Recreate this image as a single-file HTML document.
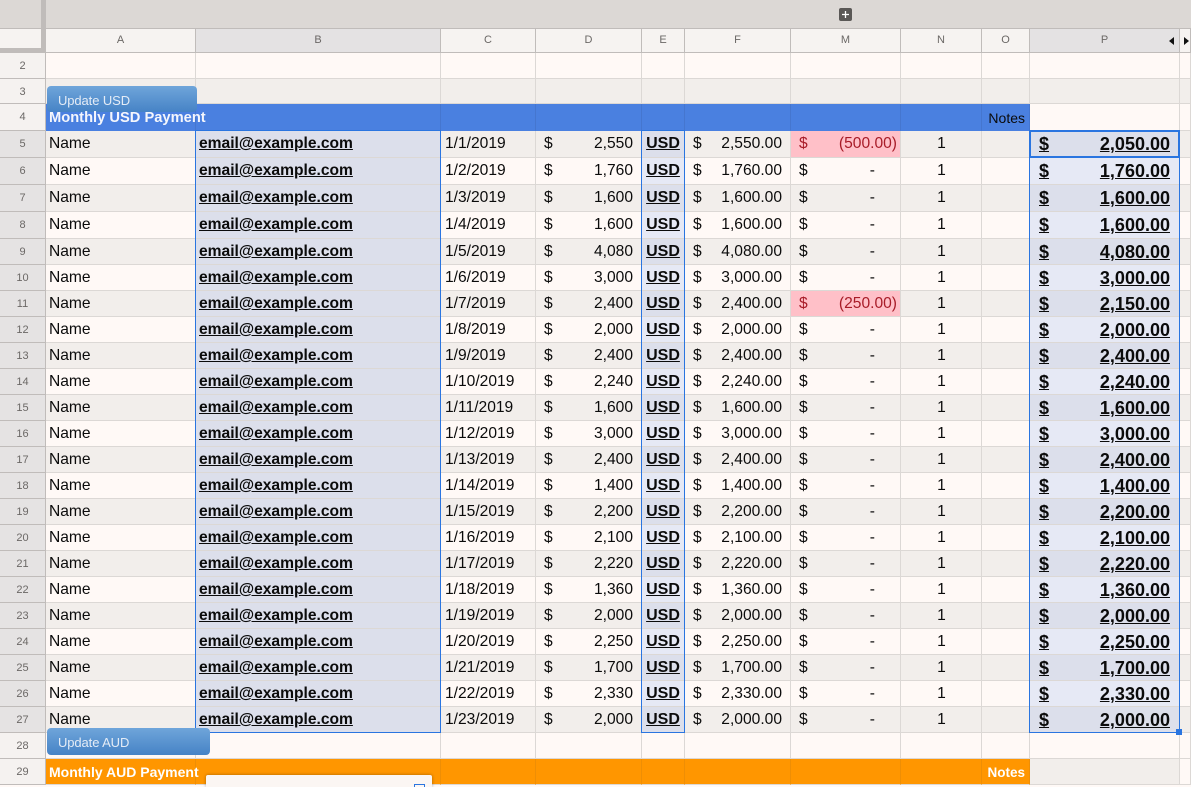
<!DOCTYPE html>
<html><head><meta charset="utf-8"><style>
html,body{margin:0;padding:0;width:1191px;height:787px;overflow:hidden;background:#fff9f6;font-family:"Liberation Sans",Arial,sans-serif;color:#0b0b0b}
.bar{position:absolute;left:0;top:0;width:1191px;height:29px;box-sizing:border-box;background:#dcd8d5;border-bottom:1px solid #c0bcba}
table{position:absolute;left:0;top:29px;border-collapse:separate;border-spacing:0;table-layout:fixed;width:1191px}
td{padding:3px 0 0;border-right:1px solid #dcd8d5;border-bottom:1px solid #dcd8d5;box-sizing:border-box;overflow:hidden;white-space:nowrap;vertical-align:top;font-size:15.6px;line-height:20px;background:#fff9f6}
tr.x td{background:#f2eeeb}
td:nth-child(1){background:#e5e3e3!important;border-right:1px solid #c0bcba;border-bottom:1px solid #c0bcba;text-align:center;font-size:11px;color:#6b6866;padding-right:0}
td:nth-child(2){padding-left:3px;background:#f2eeeb}
tr.w td:nth-child(2){background:#fff9f6}
td:nth-child(3){padding-left:3px;font-weight:bold;text-decoration:underline;background:#dcdfeb!important}
td:nth-child(4){padding-left:4px}
td:nth-child(5),td:nth-child(7){text-align:right;padding-right:8px}
td:nth-child(5) u,td:nth-child(7) u,td:nth-child(8) u{float:left;text-decoration:none}
td:nth-child(5) u{margin-left:8px}
td:nth-child(7) u{margin-left:8px}
td:nth-child(6){text-align:center;font-weight:bold;text-decoration:underline;background:#e6e9f5!important;font-size:16px}
tr.x td:nth-child(6){background:#dcdfeb!important}
td:nth-child(8){text-align:right;padding-right:25px;padding-left:0}
td:nth-child(8) u{margin-left:8px}
td.p{background:#ffc0c8!important;color:#a81c28;padding-right:3px!important}
td:nth-child(9){text-align:center;padding-left:1px}
td:nth-child(11){text-align:right;padding-right:9px;font-weight:bold;text-decoration:underline;font-size:18px;background:#e6e9f5!important}
tr.x td:nth-child(11){background:#dcdfeb!important}
td:nth-child(11) u{float:left;margin-left:9px}
tr.e td:nth-child(n+2){background:#fff9f6!important}
tr.e3 td:nth-child(n+2){background:#f2eeeb!important}
tr.t td:nth-child(n+2){background:#4a80e0!important;border-right-color:#4576cf;border-bottom-color:#4a80e0}
tr.o td:nth-child(n+2){background:#ff9600!important;border-right-color:#ee8e05}
tr.e td:nth-child(n+2),tr.e3 td:nth-child(n+2),tr.t td:nth-child(n+2),tr.o td:nth-child(n+2){padding:0;font-size:14px;font-weight:normal;text-decoration:none;text-align:right}
tr.n td:nth-child(1){background:#f5f2f0!important}
tr.t td:nth-child(11),tr.t td:nth-child(12){background:#fff9f6!important;border-right-color:#dcd8d5;border-bottom-color:#dcd8d5}
tr.o td:nth-child(11){background:#f2eeeb!important;border-right-color:#dcd8d5}
tr.o td:nth-child(12){background:#fff9f6!important;border-right-color:#dcd8d5}
tr.h td{background:#f6f3f1!important;border-right:1px solid #c0bcba;border-bottom:1px solid #c0bcba;text-align:center;font-size:11px;line-height:18px;padding:2px 0 0;color:#6b6866;font-weight:normal;text-decoration:none}
tr.h td.s{background:#e4e2e3!important}
.abs{position:absolute}
.btn{position:absolute;background:linear-gradient(#6fa5da,#4683c6);border-radius:4px;color:#e4ecf6;font-size:13px;letter-spacing:-.1px;padding-left:11px;box-sizing:border-box}
.ov{position:absolute;border:1px solid #2a75e0;box-sizing:border-box}
</style></head><body>
<div class="bar"></div>
<table>
<colgroup><col style="width:46px"><col style="width:150px"><col style="width:245px"><col style="width:95px"><col style="width:106px"><col style="width:43px"><col style="width:106px"><col style="width:110px"><col style="width:81px"><col style="width:48px"><col style="width:150px"><col style="width:11px"></colgroup>
<tr class="h" style="height:24px"><td></td><td>A</td><td class="s">B</td><td>C</td><td>D</td><td>E</td><td>F</td><td>M</td><td>N</td><td>O</td><td class="s">P</td><td></td></tr>
<tr class="e n" style="height:26px"><td>2</td><td></td><td></td><td></td><td></td><td></td><td></td><td></td><td></td><td></td><td></td><td></td></tr>
<tr class="e3 n" style="height:25px"><td>3</td><td></td><td></td><td></td><td></td><td></td><td></td><td></td><td></td><td></td><td></td><td></td></tr>
<tr class="t n" style="height:27px"><td>4</td><td></td><td></td><td></td><td></td><td></td><td></td><td></td><td></td><td style="padding:4px 4px 0 0">Notes</td><td></td><td></td></tr>
<tr class="x" style="height:27px"><td>5</td><td>Name</td><td>email@example.com</td><td>1/1/2019</td><td><u>$</u>2,550</td><td>USD</td><td><u>$</u>2,550.00</td><td class="p"><u>$</u>(500.00)</td><td>1</td><td></td><td><u>$</u>2,050.00</td><td></td></tr>
<tr class="w" style="height:27px"><td>6</td><td>Name</td><td>email@example.com</td><td>1/2/2019</td><td><u>$</u>1,760</td><td>USD</td><td><u>$</u>1,760.00</td><td><u>$</u>-</td><td>1</td><td></td><td><u>$</u>1,760.00</td><td></td></tr>
<tr class="x" style="height:27px"><td>7</td><td>Name</td><td>email@example.com</td><td>1/3/2019</td><td><u>$</u>1,600</td><td>USD</td><td><u>$</u>1,600.00</td><td><u>$</u>-</td><td>1</td><td></td><td><u>$</u>1,600.00</td><td></td></tr>
<tr class="w" style="height:27px"><td>8</td><td>Name</td><td>email@example.com</td><td>1/4/2019</td><td><u>$</u>1,600</td><td>USD</td><td><u>$</u>1,600.00</td><td><u>$</u>-</td><td>1</td><td></td><td><u>$</u>1,600.00</td><td></td></tr>
<tr class="x" style="height:26px"><td>9</td><td>Name</td><td>email@example.com</td><td>1/5/2019</td><td><u>$</u>4,080</td><td>USD</td><td><u>$</u>4,080.00</td><td><u>$</u>-</td><td>1</td><td></td><td><u>$</u>4,080.00</td><td></td></tr>
<tr class="w" style="height:26px"><td>10</td><td>Name</td><td>email@example.com</td><td>1/6/2019</td><td><u>$</u>3,000</td><td>USD</td><td><u>$</u>3,000.00</td><td><u>$</u>-</td><td>1</td><td></td><td><u>$</u>3,000.00</td><td></td></tr>
<tr class="x" style="height:26px"><td>11</td><td>Name</td><td>email@example.com</td><td>1/7/2019</td><td><u>$</u>2,400</td><td>USD</td><td><u>$</u>2,400.00</td><td class="p"><u>$</u>(250.00)</td><td>1</td><td></td><td><u>$</u>2,150.00</td><td></td></tr>
<tr class="w" style="height:26px"><td>12</td><td>Name</td><td>email@example.com</td><td>1/8/2019</td><td><u>$</u>2,000</td><td>USD</td><td><u>$</u>2,000.00</td><td><u>$</u>-</td><td>1</td><td></td><td><u>$</u>2,000.00</td><td></td></tr>
<tr class="x" style="height:26px"><td>13</td><td>Name</td><td>email@example.com</td><td>1/9/2019</td><td><u>$</u>2,400</td><td>USD</td><td><u>$</u>2,400.00</td><td><u>$</u>-</td><td>1</td><td></td><td><u>$</u>2,400.00</td><td></td></tr>
<tr class="w" style="height:26px"><td>14</td><td>Name</td><td>email@example.com</td><td>1/10/2019</td><td><u>$</u>2,240</td><td>USD</td><td><u>$</u>2,240.00</td><td><u>$</u>-</td><td>1</td><td></td><td><u>$</u>2,240.00</td><td></td></tr>
<tr class="x" style="height:26px"><td>15</td><td>Name</td><td>email@example.com</td><td>1/11/2019</td><td><u>$</u>1,600</td><td>USD</td><td><u>$</u>1,600.00</td><td><u>$</u>-</td><td>1</td><td></td><td><u>$</u>1,600.00</td><td></td></tr>
<tr class="w" style="height:26px"><td>16</td><td>Name</td><td>email@example.com</td><td>1/12/2019</td><td><u>$</u>3,000</td><td>USD</td><td><u>$</u>3,000.00</td><td><u>$</u>-</td><td>1</td><td></td><td><u>$</u>3,000.00</td><td></td></tr>
<tr class="x" style="height:26px"><td>17</td><td>Name</td><td>email@example.com</td><td>1/13/2019</td><td><u>$</u>2,400</td><td>USD</td><td><u>$</u>2,400.00</td><td><u>$</u>-</td><td>1</td><td></td><td><u>$</u>2,400.00</td><td></td></tr>
<tr class="w" style="height:26px"><td>18</td><td>Name</td><td>email@example.com</td><td>1/14/2019</td><td><u>$</u>1,400</td><td>USD</td><td><u>$</u>1,400.00</td><td><u>$</u>-</td><td>1</td><td></td><td><u>$</u>1,400.00</td><td></td></tr>
<tr class="x" style="height:26px"><td>19</td><td>Name</td><td>email@example.com</td><td>1/15/2019</td><td><u>$</u>2,200</td><td>USD</td><td><u>$</u>2,200.00</td><td><u>$</u>-</td><td>1</td><td></td><td><u>$</u>2,200.00</td><td></td></tr>
<tr class="w" style="height:26px"><td>20</td><td>Name</td><td>email@example.com</td><td>1/16/2019</td><td><u>$</u>2,100</td><td>USD</td><td><u>$</u>2,100.00</td><td><u>$</u>-</td><td>1</td><td></td><td><u>$</u>2,100.00</td><td></td></tr>
<tr class="x" style="height:26px"><td>21</td><td>Name</td><td>email@example.com</td><td>1/17/2019</td><td><u>$</u>2,220</td><td>USD</td><td><u>$</u>2,220.00</td><td><u>$</u>-</td><td>1</td><td></td><td><u>$</u>2,220.00</td><td></td></tr>
<tr class="w" style="height:26px"><td>22</td><td>Name</td><td>email@example.com</td><td>1/18/2019</td><td><u>$</u>1,360</td><td>USD</td><td><u>$</u>1,360.00</td><td><u>$</u>-</td><td>1</td><td></td><td><u>$</u>1,360.00</td><td></td></tr>
<tr class="x" style="height:26px"><td>23</td><td>Name</td><td>email@example.com</td><td>1/19/2019</td><td><u>$</u>2,000</td><td>USD</td><td><u>$</u>2,000.00</td><td><u>$</u>-</td><td>1</td><td></td><td><u>$</u>2,000.00</td><td></td></tr>
<tr class="w" style="height:26px"><td>24</td><td>Name</td><td>email@example.com</td><td>1/20/2019</td><td><u>$</u>2,250</td><td>USD</td><td><u>$</u>2,250.00</td><td><u>$</u>-</td><td>1</td><td></td><td><u>$</u>2,250.00</td><td></td></tr>
<tr class="x" style="height:26px"><td>25</td><td>Name</td><td>email@example.com</td><td>1/21/2019</td><td><u>$</u>1,700</td><td>USD</td><td><u>$</u>1,700.00</td><td><u>$</u>-</td><td>1</td><td></td><td><u>$</u>1,700.00</td><td></td></tr>
<tr class="w" style="height:26px"><td>26</td><td>Name</td><td>email@example.com</td><td>1/22/2019</td><td><u>$</u>2,330</td><td>USD</td><td><u>$</u>2,330.00</td><td><u>$</u>-</td><td>1</td><td></td><td><u>$</u>2,330.00</td><td></td></tr>
<tr class="x" style="height:26px"><td>27</td><td>Name</td><td>email@example.com</td><td>1/23/2019</td><td><u>$</u>2,000</td><td>USD</td><td><u>$</u>2,000.00</td><td><u>$</u>-</td><td>1</td><td></td><td><u>$</u>2,000.00</td><td></td></tr>
<tr class="e n" style="height:26px"><td>28</td><td></td><td></td><td></td><td></td><td></td><td></td><td></td><td></td><td></td><td></td><td></td></tr>
<tr class="o n" style="height:26px"><td>29</td><td></td><td></td><td></td><td></td><td></td><td></td><td></td><td></td><td style="padding:4px 4px 0 0;color:#fff;font-weight:bold;font-size:13.5px">Notes</td><td></td><td></td></tr>
</table>

<div class="abs" style="left:41px;top:0;width:5px;height:53px;background:#c0bcba"></div>
<div class="abs" style="left:0;top:48px;width:46px;height:5px;background:#c0bcba"></div>
<div class="abs" style="left:0;top:29px;width:41px;height:19px;background:#f6f3f1"></div>

<div class="abs" style="left:839px;top:8px;width:13px;height:13px;background:#5a5856;border-radius:2px"><svg width="13" height="13" viewBox="0 0 13 13" style="display:block"><path d="M6.5 3v7M3 6.5h7" stroke="#fff" stroke-width="1.3"/></svg></div>
<svg class="abs" style="left:1167px;top:36px" width="24" height="10" viewBox="0 0 24 10"><path d="M7 1v8L2 5zM17 1v8l5-4z" fill="#111"/></svg>

<div class="ov" style="left:195px;top:130px;width:246px;height:603px"></div>
<div class="ov" style="left:641px;top:130px;width:44px;height:603px"></div>
<div class="ov" style="left:1029px;top:130px;width:151px;height:603px"></div>
<div class="ov" style="left:1029px;top:130px;width:151px;height:28px;border-width:2px"></div>
<div class="abs" style="left:1176px;top:729px;width:6px;height:6px;background:#2a75e0"></div>

<div class="btn" style="left:47px;top:86px;width:150px;height:26px;line-height:30px">Update USD</div>
<div class="btn" style="left:47px;top:728px;width:163px;height:27px;line-height:30px">Update AUD</div>
<div class="abs" style="left:49px;top:105px;font-size:14.7px;font-weight:bold;color:#f4f6fc;line-height:27px;white-space:nowrap">Monthly USD Payment</div>
<div class="abs" style="left:49px;top:759px;font-size:14px;font-weight:bold;color:#fff;line-height:27px;white-space:nowrap">Monthly AUD Payment</div>

<div class="abs" style="left:206px;top:775px;width:226px;height:12px;background:#fbf6f3;box-shadow:0 0 3px rgba(0,0,0,.35);border-radius:2px 2px 0 0;overflow:hidden;font-size:14px;line-height:18px;color:#2255bb;white-space:nowrap"><span class="abs" style="left:23px;top:8px">mail</span><span class="abs" style="left:130px;top:8px">@gmail</span><span class="abs" style="left:208px;top:9px;width:9px;height:9px;border:1px solid #2a75e0"></span></div>
</body></html>
